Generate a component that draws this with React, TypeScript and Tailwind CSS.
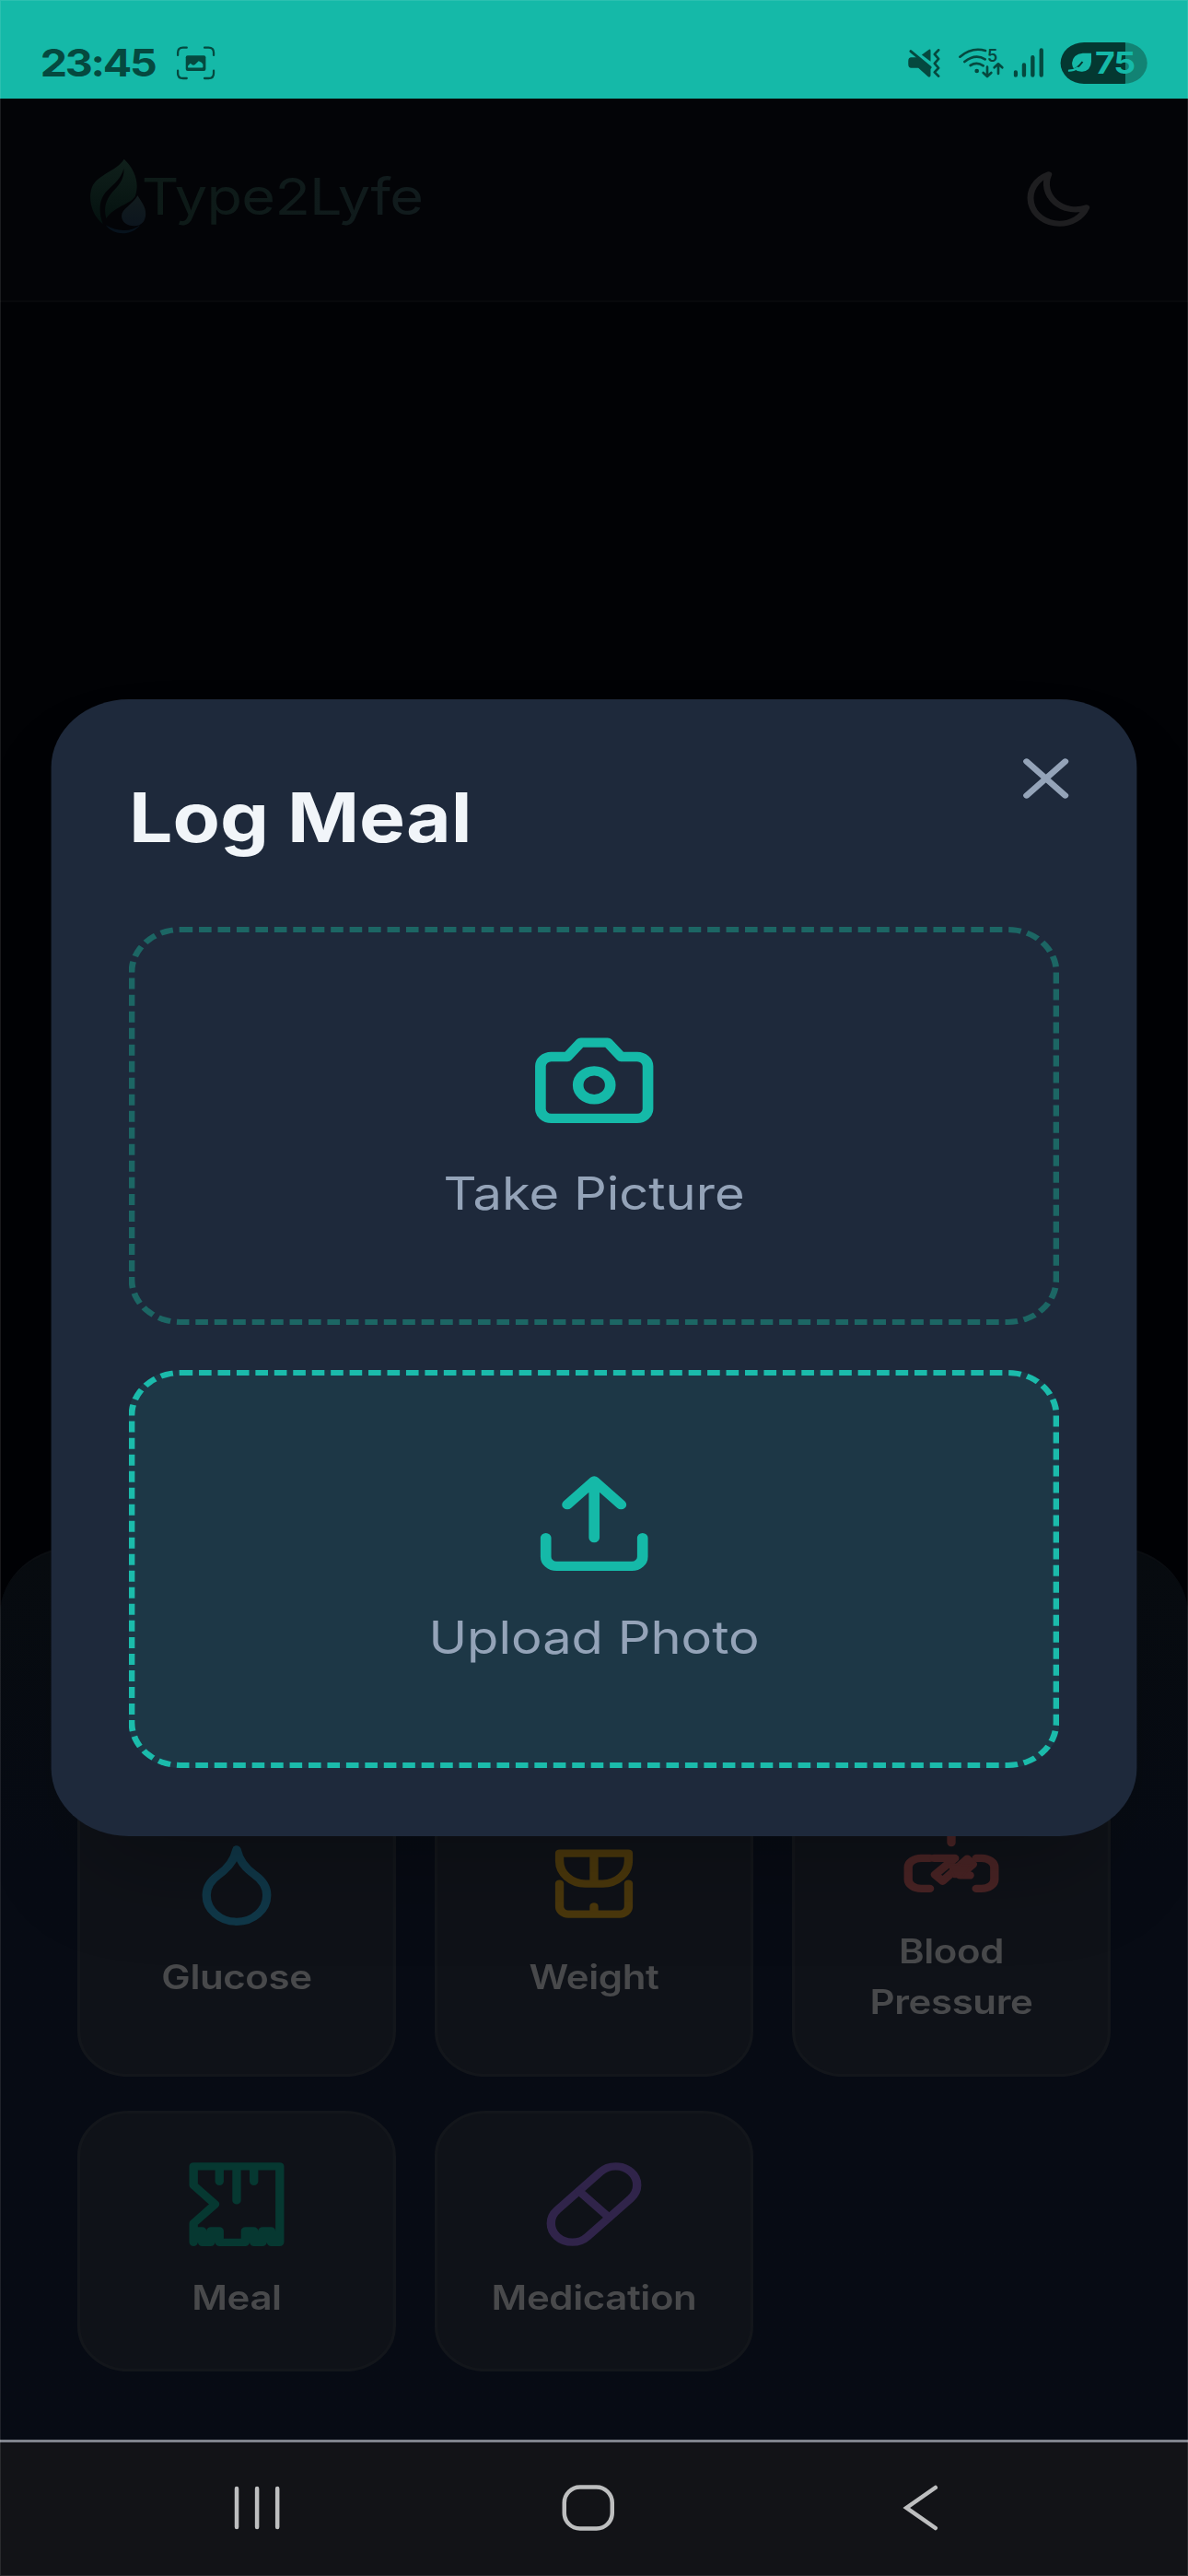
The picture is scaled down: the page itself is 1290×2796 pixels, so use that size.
import React from "react";

const TEAL = "#15b9a8";
const INK = "#05493f";

function StatusBar() {
  return (
    <div className="flex h-[107px] shrink-0 items-center bg-[#15b9a8] pl-[38.5px] pr-[39px] pt-[29px]">
      <span className="w-[112.5px] whitespace-nowrap text-[41px] font-bold leading-[44px] tracking-[-2px] text-[#05493f]">23:45</span>
      <svg className="ml-[18px] h-[37px] w-[37px]" viewBox="577 149 126 112" preserveAspectRatio="none" fill="none">
        <path
          d="M581 179v-8q0-17 17-17h12M668 154h13q17 0 17 17v8M698 230v8q0 17-17 17h-13M610 255h-12q-17 0-17-17v-8"
          stroke={INK}
          strokeWidth="7"
          strokeLinecap="round"
        />
        <rect x="607" y="180" width="65" height="51" rx="6" fill={INK} />
        <path d="M614 219v-5l8-8 7 5q8 2 12-5l8-8 9 5 5 6v9q0 2-3 2h-42q-4 0-4-1z" fill={TEAL} />
      </svg>
      <div className="flex-1" />
      <svg className="h-[31px] w-[31px]" viewBox="257 155 106 94" preserveAspectRatio="none">
        <path d="M302 175l24-18q5-2 5 3v37z" fill={INK} />
        <path d="M268 183h18l45 33v28q-2 6-8 3l-32-29h-23q-10 0-10-12v-11q0-12 10-12z" fill={INK} />
        <path d="M266 163L330 216" stroke={INK} strokeWidth="9" strokeLinecap="round" />
        <path
          d="M357 159l-13 14 13 15-13 15 13 15-13 14 13 13"
          fill="none"
          stroke={INK}
          strokeWidth="8"
          strokeLinecap="round"
          strokeLinejoin="round"
        />
      </svg>
      <svg className="ml-[17px] h-[34px] w-[44px]" viewBox="421 155 150 102" preserveAspectRatio="none">
        <g fill="none" stroke={INK} strokeWidth="8" strokeLinecap="round" strokeLinejoin="round">
          <path d="M427 187Q466 154 510 167M442 203q35-27 67-8M461 215q21-13 42 1" />
          <path d="M516 220v30M503 239l13 12 13-12M552 242v-30M539 222l13-12 13 12" />
        </g>
        <circle cx="482" cy="233" r="7" fill={INK} />
        <text x="516" y="202" fontSize="54" fontWeight="600" fontFamily="Inter, sans-serif" fill={INK}>
          5
        </text>
      </svg>
      <svg className="ml-[9px] h-[32px] w-[29px]" viewBox="604 155 98 94" preserveAspectRatio="none">
        <path d="M611 233v9M638 209v33M666 185v57M694 162v80" stroke={INK} strokeWidth="13" strokeLinecap="round" />
      </svg>
      <div className="ml-[16px] flex h-[45px] w-[83px] items-center rounded-full bg-linear-to-r from-[#043831] from-75% to-[#128374] to-75% pl-[7px]">
        <svg className="h-[22px] w-[23px]" viewBox="777 172 80 66" preserveAspectRatio="none">
          <path d="M855 174h-28q-33 3-36 32 0 14 8 20 10 9 26 8 28-2 30-32z" fill={TEAL} />
          <path d="M780 232q26-2 46-30" fill="none" stroke="#043831" strokeWidth="6" />
          <path d="M781 231q16 0 28-9" fill="none" stroke={TEAL} strokeWidth="7" strokeLinecap="round" />
        </svg>
        <span className="ml-[3px] text-[33px] font-bold leading-[44px] tracking-[-1px] text-[#15b9a8]">75</span>
      </div>
    </div>
  );
}

function Logo() {
  return (
    <svg className="h-[82px] w-[54px]" viewBox="294 515 183 246" preserveAspectRatio="none">
      <defs>
        <linearGradient id="leaf" x1="0" y1="0" x2="0" y2="1">
          <stop offset="0" stopColor="#10201b" />
          <stop offset="1" stopColor="#04110f" />
        </linearGradient>
        <linearGradient id="drop" x1="0" y1="0" x2="0" y2="1">
          <stop offset="0" stopColor="#121c1e" />
          <stop offset="1" stopColor="#0c151e" />
        </linearGradient>
      </defs>
      <path
        d="M405 517C440 550 456 595 441 638C425 665 375 670 347 710C336 670 350 640 380 610C398 590 406 570 404 548C395 580 375 596 350 620C322 648 322 690 336 728C300 700 286 645 302 606C322 565 378 558 405 517Z"
        fill="url(#leaf)"
      />
      <path d="M449 636C463 660 475 672 475 695C475 720 460 735 438 735C414 735 397 722 397 702C397 680 432 665 449 636Z" fill="url(#drop)" />
      <path d="M345 732C372 768 430 768 458 731C430 754 385 756 345 732Z" fill="#07121c" />
    </svg>
  );
}

function Header() {
  return (
    <header className="flex h-[221px] shrink-0 items-center justify-between border-b-[2px] border-[#07080b] bg-[#030407] pb-[3px] pl-[86px] pr-[86px]">
      <div className="flex items-center pb-[4px]">
        <Logo />
        <span className="-ml-[4.5px] bg-linear-to-r from-[#0d1a17] to-[#111b1d] bg-clip-text text-[55.5px] leading-[74px] tracking-[-0.6px] text-transparent">
          Type2Lyfe
        </span>
      </div>
      <svg className="h-[74px] w-[74px]" viewBox="0 0 24 24" fill="none" stroke="#1e1e20" strokeWidth="2" strokeLinecap="round" strokeLinejoin="round">
        <path d="M20.354 15.354A9 9 0 018.646 3.646 9.003 9.003 0 0012 21a9.003 9.003 0 008.354-5.646z" />
      </svg>
    </header>
  );
}

function LineIcon({ className, children }: { className: string; children: React.ReactNode }) {
  return (
    <svg className={className} viewBox="0 0 24 24" fill="none" stroke="currentColor" strokeWidth="2" strokeLinecap="round" strokeLinejoin="round">
      {children}
    </svg>
  );
}

const tiles = [
  {
    label: "Glucose",
    tone: "text-[#103849]",
    icon: <path d="M12 22a7 7 0 0 0 7-7c0-2-1-3.9-3-5.5s-3.5-4-4-6.5c-.5 2.5-2 4.9-4 6.5C6 11.1 5 13 5 15a7 7 0 0 0 7 7z" />,
  },
  {
    label: "Weight",
    tone: "text-[#4b380c]",
    icon: <path d="M4 4h16v2a6 6 0 0 1-6 6h-4a6 6 0 0 1-6-6zM12 4v8M4 12v6a2 2 0 0 0 2 2h12a2 2 0 0 0 2-2v-6M12 18v2" />,
  },
  {
    label: "Blood Pressure",
    tone: "text-[#4a2425]",
    icon: (
      <>
        <path d="M12 2v6M7 12.1H5a3 2.4 0 0 0-3 2.4v3.2a3 2.4 0 0 0 3 2.4h2M17.8 12.1H19a3 2.4 0 0 1 3 2.4v3.2a3 2.4 0 0 1-3 2.4h-1.2" />
        <path d="M8 12.1h4.8L8.2 16.4l1.8 1.7L15.7 12.3l1.3 1.4-3 2.9h2.3" />
        <path d="M11.4 13.6l1.2 3.4h2l2-3z" fill="currentColor" strokeWidth="0.5" />
      </>
    ),
  },
  {
    label: "Meal",
    tone: "text-[#063831]",
    icon: (
      <path d="M2 2h20v20h-2v-3h-2v3h-2v-3h-2v3H8v-3H6v3H4v-3H2v3v-5l5-5-5-5zM8 2v4M12 2v9M16 2v4" />
    ),
  },
  {
    label: "Medication",
    tone: "text-[#30244a]",
    icon: (
      <>
        <path d="m10.5 20.5 10-10a4.95 4.95 0 1 0-7-7l-10 10a4.95 4.95 0 1 0 7 7Z" />
        <path d="m8.5 8.5 7 7" />
      </>
    ),
  },
];

function LogSheet() {
  return (
    <section className="flex h-[970px] shrink-0 flex-col justify-end rounded-t-[74px] border-t-[3px] border-[#0b0e12] bg-linear-to-b from-[#080c10] to-[#070b14] to-35% px-[74px] pb-[74px]">
      <div className="grid grid-cols-3 gap-[37px]">
        {tiles.map((t) => (
          <div
            key={t.label}
            className="flex flex-col items-center justify-center rounded-[49px] border-[3px] border-[#13161b] bg-[#0f1218] px-[30px] py-[49px]"
          >
            <LineIcon className={`h-[99px] w-[99px] ${t.tone}`}>{t.icon}</LineIcon>
            <span className="mb-[1px] mt-[23.7px] text-center text-[37px] font-semibold leading-[55.5px] tracking-[-0.35px] text-[#48494b]">
              {t.label}
            </span>
          </div>
        ))}
      </div>
    </section>
  );
}

function LogMealDialog() {
  return (
    <div className="absolute inset-x-[49.4px] top-[759px] flex h-[1234px] flex-col rounded-[74px] bg-[#1e293b] p-[74px] shadow-[0_60px_100px_-30px_rgba(0,0,0,0.25)]">
      <h2 className="mb-[69px] pt-[5px] text-[74px] font-bold leading-[98.7px] text-[#f1f5f9]">Log Meal</h2>
      <button className="absolute right-[49.4px] top-[49.4px] text-[#94a3b8]" aria-label="Close">
        <LineIcon className="h-[74px] w-[74px]">
          <path d="M18 6 6 18M6 6l12 12" />
        </LineIcon>
      </button>
      <div className="flex flex-col gap-[49.4px] text-[49.4px] leading-[74px] text-[#94a3b8]">
        <button className="flex h-[432px] flex-col items-center rounded-[49.4px] border-[6px] border-dashed border-[#1c6664] pt-[99px]">
          <LineIcon className="h-[123.4px] w-[123.4px] text-[#15b9a8]">
            <path d="M14.5 4h-5L7 7H4a2 2 0 0 0-2 2v9a2 2 0 0 0 2 2h16a2 2 0 0 0 2-2V9a2 2 0 0 0-2-2h-3l-2.5-3z" />
            <circle cx="12" cy="13" r="3" />
          </LineIcon>
          <span className="mt-[24px]">Take Picture</span>
        </button>
        <button className="flex h-[432px] flex-col items-center rounded-[49.4px] border-[6px] border-dashed border-[#1bbbab] bg-[#1d3746] pt-[99px]">
          <LineIcon className="h-[123.4px] w-[123.4px] text-[#15b9a8]">
            <path d="M21 15v4a2 2 0 0 1-2 2H5a2 2 0 0 1-2-2v-4M17 8l-5-5-5 5M12 3v12" />
          </LineIcon>
          <span className="mt-[24.7px]">Upload Photo</span>
        </button>
      </div>
    </div>
  );
}

function NavBar() {
  return (
    <nav className="flex h-[148px] shrink-0 items-start border-t-[3px] border-[#80848d] bg-[#121317] pl-[223px] pr-[239px] pt-[45px]">
      <svg className="h-[52px] w-[46px]" viewBox="0 0 52 52" preserveAspectRatio="none" stroke="#bdbebf" strokeWidth="4.5" strokeLinecap="round">
        <path d="M4 5v42M26 5v42M48 5v42" />
      </svg>
      <div className="flex-1" />
      <svg className="mr-[275.5px] h-[52px] w-[52px]" viewBox="0 0 59 52" preserveAspectRatio="none" fill="none" stroke="#bdbebf" strokeWidth="4.5">
        <rect x="3.5" y="3.5" width="52" height="45" rx="17" />
      </svg>
      <svg className="h-[52px] w-[34px]" viewBox="0 0 38 52" preserveAspectRatio="none" fill="none" stroke="#bdbebf" strokeWidth="4.5" strokeLinecap="round">
        <path d="M35 4L4 26l31 22" />
      </svg>
    </nav>
  );
}

export default function App() {
  return (
    <div className="relative h-[2796px] w-[1290px] overflow-hidden bg-[#010205]">
      <div className="relative flex h-[2796px] w-[1137px] origin-top-left scale-x-[1.13456] flex-col font-['Inter',sans-serif]">
        <StatusBar />
        <Header />
        <main className="flex-1" />
        <LogSheet />
        <NavBar />
        <LogMealDialog />
      </div>
      <div className="pointer-events-none absolute inset-0 border border-white/10" />
    </div>
  );
}
